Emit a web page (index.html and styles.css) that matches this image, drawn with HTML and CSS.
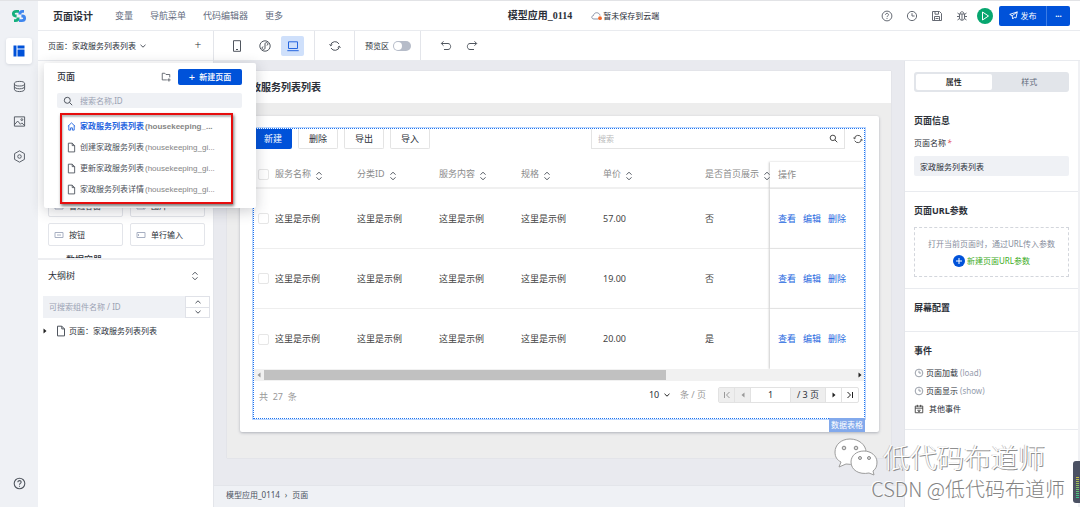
FILE: index.html
```html
<!DOCTYPE html>
<html lang="zh-CN">
<head>
<meta charset="utf-8">
<title>页面设计</title>
<link rel="stylesheet" href="styles.css">
</head>
<body>
<svg class="defs" aria-hidden="true">
  <symbol id="sort" viewBox="0 0 8 10"><path d="M1.5 3.7 4 1.2l2.5 2.5M1.5 6.3 4 8.8l2.5-2.5"/></symbol>
  <symbol id="file" viewBox="0 0 10 12"><path d="M1.5 1.2h4.3l2.7 2.7v7H1.5zM5.8 1.2v2.7h2.7"/></symbol>
  <symbol id="search" viewBox="0 0 10 10"><circle cx="4.3" cy="4.3" r="3"/><path d="M6.6 6.6 9.2 9.2"/></symbol>
  <symbol id="down" viewBox="0 0 8 6"><path d="M1.5 1.8 4 4.2l2.5-2.4"/></symbol>
  <symbol id="up" viewBox="0 0 8 6"><path d="M1.5 4.2 4 1.8l2.5 2.4"/></symbol>
  <symbol id="clock" viewBox="0 0 12 12"><circle cx="6" cy="6" r="4.6"/><path d="M6 3.2V6h2.6"/></symbol>
  <symbol id="help" viewBox="0 0 12 12"><circle cx="6" cy="6" r="4.9"/><path d="M4.5 4.8C4.5 2.8 7.6 2.900 7.500 4.800 7.500 5.900 6 5.900 6 7.100M6 8.100v.9"/></symbol>
  <symbol id="reload" viewBox="0 0 12 12"><path d="M1.600 5.400A4.500 4.500 0 0 1 10 4M10.400 6.600A4.500 4.500 0 0 1 2 8M.5 4.300l1.200 1.500 1.600-1.200M11.500 7.700l-1.200-1.500-1.600 1.200"/></symbol>
</svg>
<div class="app">
  <nav class="rail">
    <svg class="logo" viewBox="0 0 16 14"><g fill="none" stroke-width="2.800"><path stroke="#14b07d" d="M8 2.400H5.200C1.500 2.400 1.500 6.800 4.800 7h.8M3 11.600h1.500C6.800 11.600 7.200 10 7.200 8.500"/><path stroke="#3f86ee" d="M8 11.600h2.800c3.700 0 3.700-4.400.4-4.600h-.8M13 2.400h-1.500C9.200 2.400 8.800 4 8.800 5.500"/></g></svg>
    <button class="rail-btn active" aria-label="页面"><svg viewBox="0 0 12 12"><path fill="#0052d9" d="M.5.5h3v11h-3zM4.500.5h7v3h-7zM4.500 4.500h7v7h-7z"/></svg></button>
    <button class="rail-btn" aria-label="数据"><svg class="line" viewBox="0 0 14 14"><ellipse cx="7" cy="4" rx="5.500" ry="2.500"/><path d="M1.500 4v6c0 3.300 11 3.300 11 0V4M1.500 7c0 3.300 11 3.300 11 0"/></svg></button>
    <button class="rail-btn" aria-label="素材"><svg class="line" viewBox="0 0 14 14"><path d="M1.500 2h11v10h-11zM1.500 10.500l3.500-4 3 3.500 1.500-1.500 3 3"/><circle cx="9.500" cy="5" r="1"/></svg></button>
    <button class="rail-btn" aria-label="设置"><svg class="line" viewBox="0 0 14 14"><path d="m7 .9 5.300 3v6.200L7 13.100l-5.300-3V3.900z"/><circle cx="7" cy="7" r="1.900"/></svg></button>
    <button class="rail-btn last" aria-label="帮助"><svg class="line"><use href="#help"/></svg></button>
  </nav>
  <div class="main">
    <header class="top">
      <h1>页面设计</h1>
      <nav class="menu"><a href="#">变量</a><a href="#">导航菜单</a><a href="#">代码编辑器</a><a href="#">更多</a></nav>
      <div class="app-name"><b>模型应用_0114</b>
        <svg class="line cloud" viewBox="0 0 12 10"><path stroke="#8a93a6" d="M7 8H3C0 8 .3 4.700 2.500 4.500 3 .8 8.300.8 9 4.500"/><circle cx="9" cy="7.200" r="1.900" fill="#f2682a" stroke="none"/></svg><span>暂未保存到云端</span></div>
      <div class="top-actions">
        <button aria-label="帮助"><svg class="line"><use href="#help"/></svg></button>
        <button aria-label="历史"><svg class="line"><use href="#clock"/></svg></button>
        <button aria-label="保存"><svg class="line" viewBox="0 0 12 12"><path d="M1.500 1.500h7l2 2v7h-9zM3.500 10.500v-4h5v4M4 1.500v2.700h3.500V1.500M4.500 8.500h3"/></svg></button>
        <button aria-label="调试"><svg class="line" viewBox="0 0 12 12"><path d="M3.500 4h5v4c0 3-5 3-5 0zM4 4c0-3 4-3 4 0M6 4v6M1.500 3l2 1.500M10.500 3l-2 1.500M1 6.500h2.500M8.500 6.500H11M1.500 10l2-1.500M10.500 10l-2-1.500"/></svg></button>
      </div>
      <button class="play" aria-label="预览"><svg viewBox="0 0 16 16"><path d="M5.500 4v8l6-4z" fill="none" stroke="#fff"/></svg></button>
      <div class="publish"><button><svg viewBox="0 0 10 10"><path d="M9.200 1 .8 3.800l2.700 1.500.6 3.600 1.700-2 2 .8zM3.500 5.300 9.200 1" fill="none" stroke="#fff"/></svg>发布</button><button aria-label="更多操作">···</button></div>
    </header>
    <div class="work">
      <aside class="left">
        <section class="palette">
          <div class="page-head"><span>页面：家政服务列表列表</span><svg class="line chev"><use href="#down"/></svg><button aria-label="添加">+</button></div>
          <div class="cards">
            <button><svg class="line" viewBox="0 0 10 8"><path d="M1 1h8v6H1zM3 4h4"/></svg>普通容器</button>
            <button><svg class="line" viewBox="0 0 10 8"><path d="M1 1h8v6H1zM1 6l3-3 4 4"/></svg>图片</button>
            <button><svg class="line" viewBox="0 0 10 8"><path d="M1 1.500h8v5H1zM3 4h4"/></svg>按钮</button>
            <button><svg class="line" viewBox="0 0 10 8"><path d="M1 1.500h8v5H1zM2.500 3v2"/></svg>单行输入</button>
          </div>
          <h3 class="group"><svg class="line chev"><use href="#up"/></svg>数据容器</h3>
        </section>
        <section class="outline">
          <div class="outline-head"><h2>大纲树</h2><svg class="line sort"><use href="#sort"/></svg></div>
          <div class="tree-search"><input aria-label="搜索组件" placeholder="可搜索组件名称 / ID"><div class="stepper"><button aria-label="上一个"><svg class="line chev"><use href="#up"/></svg></button><button aria-label="下一个"><svg class="line chev"><use href="#down"/></svg></button></div></div>
          <div class="tree-row"><svg class="caret" viewBox="0 0 4 6"><path d="M.5.5 3.500 3 .5 5.500z"/></svg><svg class="line file"><use href="#file"/></svg>页面：家政服务列表列表</div>
        </section>
      </aside>
      <div class="right">
        <div class="tools">
          <div class="group-a">
            <button aria-label="手机"><svg class="line" viewBox="0 0 12 12"><path d="M2.500.7h7v10.600h-7zM5 9.500h2"/></svg></button>
            <button aria-label="小程序"><svg class="line" viewBox="0 0 12 12"><circle cx="6" cy="6" r="5.200"/><path d="M6 8c0 2-3 1.800-3 0 0-.8.700-1.200 1.300-1.300M6 8V4c0-2 3-1.800 3 0 0 .8-.7 1.200-1.300 1.300"/></svg></button>
            <button class="on" aria-label="桌面"><svg class="line" viewBox="0 0 12 12"><path d="M1.500 1.800h9v6.700h-9zM.3 10.700h11.400"/></svg></button>
          </div>
          <div class="group-b"><button aria-label="刷新"><svg class="line"><use href="#reload"/></svg></button></div>
          <div class="group-c"><label for="pv">预览区</label><input id="pv" type="checkbox" class="switch"></div>
          <div class="group-d">
            <button aria-label="撤销"><svg class="line" viewBox="0 0 12 12"><path d="M1.500 3.500h6.500c3.500 0 3.500 6 0 6H4M3.500 1.300 1.300 3.500l2.200 2.200"/></svg></button>
            <button aria-label="重做"><svg class="line" viewBox="0 0 12 12"><path d="M10.500 3.500H4c-3.500 0-3.500 6 0 6h4M8.500 1.300l2.200 2.200-2.200 2.200"/></svg></button>
          </div>
        </div>
        <div class="body">
          <div class="center">
            <div class="canvas">
              <div class="stage">
                <h2 class="page-title">家政服务列表列表</h2>
                <div class="sheet">
                  <div class="grid-box">
                    <div class="bar">
                      <button class="primary">新建</button><button>删除</button><button>导出</button><button>导入</button>
                      <div class="find"><input aria-label="搜索" placeholder="搜索"><svg class="line"><use href="#search"/></svg></div>
                      <button class="sync" aria-label="刷新"><svg class="line"><use href="#reload"/></svg></button>
                    </div>
                    <table>
                      <colgroup><col class="c-check"><col class="c-text"><col class="c-text"><col class="c-text"><col class="c-text"><col class="c-price"><col class="c-show"><col></colgroup>
                      <thead><tr><th><input type="checkbox" aria-label="全选"></th><th>服务名称<svg class="line sort"><use href="#sort"/></svg></th><th>分类ID<svg class="line sort"><use href="#sort"/></svg></th><th>服务内容<svg class="line sort"><use href="#sort"/></svg></th><th>规格<svg class="line sort"><use href="#sort"/></svg></th><th>单价<svg class="line sort"><use href="#sort"/></svg></th><th>是否首页展示<svg class="line sort"><use href="#sort"/></svg></th><th class="ops">操作</th></tr></thead>
                      <tbody>
                        <tr><td><input type="checkbox" aria-label="选择"></td><td>这里是示例</td><td>这里是示例</td><td>这里是示例</td><td>这里是示例</td><td>57.00</td><td>否</td><td class="ops"><a href="#">查看</a><a href="#">编辑</a><a href="#">删除</a></td></tr>
                        <tr><td><input type="checkbox" aria-label="选择"></td><td>这里是示例</td><td>这里是示例</td><td>这里是示例</td><td>这里是示例</td><td>19.00</td><td>否</td><td class="ops"><a href="#">查看</a><a href="#">编辑</a><a href="#">删除</a></td></tr>
                        <tr><td><input type="checkbox" aria-label="选择"></td><td>这里是示例</td><td>这里是示例</td><td>这里是示例</td><td>这里是示例</td><td>20.00</td><td>是</td><td class="ops"><a href="#">查看</a><a href="#">编辑</a><a href="#">删除</a></td></tr>
                      </tbody>
                    </table>
                    <div class="scroll"><svg class="caret back" viewBox="0 0 4 6"><path d="M3.500.5.5 3l3 2.500z"/></svg><div class="track"><div class="thumb"></div></div><svg class="caret" viewBox="0 0 4 6"><path d="M.5.5 3.500 3 .5 5.500z"/></svg></div>
                    <div class="pager">
                      <span class="total">共 &nbsp;27 &nbsp;条</span>
                      <div class="size"><select aria-label="每页条数"><option>10</option></select><svg class="line chev"><use href="#down"/></svg></div><span class="unit">条 / 页</span>
                      <div class="pages">
                        <button class="off" aria-label="首页"><svg class="line" viewBox="0 0 8 8"><path d="M1.500 1v6M6.500 1 3.500 4l3 3"/></svg></button>
                        <button class="off" aria-label="上一页"><svg class="caret" viewBox="0 0 4 6"><path d="M3.500.5.5 3l3 2.500z"/></svg></button>
                        <input aria-label="页码" value="1"><span>/ 3 页</span>
                        <button aria-label="下一页"><svg class="caret" viewBox="0 0 4 6"><path d="M.5.5 3.500 3 .5 5.500z"/></svg></button>
                        <button aria-label="末页"><svg class="line" viewBox="0 0 8 8"><path d="M6.500 1v6M1.500 1l3 3-3 3"/></svg></button>
                      </div>
                    </div>
                    <span class="tag">数据表格</span>
                  </div>
                </div>
              </div>
            </div>
            <footer class="crumbs"><span>模型应用_0114</span><span>›</span><span>页面</span></footer>
          </div>
          <aside class="props">
            <div class="tabs"><button class="on">属性</button><button>样式</button></div>
            <section class="info"><h2>页面信息</h2><label for="pn">页面名称<i>*</i></label><input id="pn" value="家政服务列表列表"></section>
            <section class="url"><h2>页面URL参数</h2><div class="drop"><p>打开当前页面时，通过URL传入参数</p><button><svg viewBox="0 0 12 12"><circle cx="6" cy="6" r="6" fill="#0052d9"/><path d="M3 6h6M6 3v6" stroke="#fff"/></svg>新建页面URL参数</button></div></section>
            <section class="screen"><h2>屏幕配置</h2></section>
            <section class="events"><h2>事件</h2>
              <div><svg class="line"><use href="#clock"/></svg>页面加载<em>(load)</em></div>
              <div><svg class="line"><use href="#clock"/></svg>页面显示<em>(show)</em></div>
              <div><svg class="line dark" viewBox="0 0 12 12"><path d="M1.500 2.500h9v8h-9zM1.500 5h9M4 1v2.500M8 1v2.500M4 7.500h4M5 9h2"/></svg><span>其他事件</span></div>
            </section>
          </aside>
        </div>
      </div>
    </div>
  </div>
  <div class="popover">
    <div class="pop-head"><h2>页面</h2><button class="folder" aria-label="新建文件夹"><svg class="line" viewBox="0 0 12 12"><path d="M7 9.500H1.500v-8h3L6 3h4.500v3.500M9.500 7.500v4M7.500 9.500h4"/></svg></button><button class="new"><b>+</b>新建页面</button></div>
    <div class="pop-search"><svg class="line"><use href="#search"/></svg><input aria-label="搜索页面" placeholder="搜索名称,ID"></div>
    <ul>
      <li class="cur"><svg class="line" viewBox="0 0 10 12"><path d="M1 5.800 5 2l4 3.800M2 5v5h2V7.500h2V10h2V5"/></svg>家政服务列表列表<span>(housekeeping_...</span></li>
      <li><svg class="line"><use href="#file"/></svg>创建家政服务列表<span>(housekeeping_gi...</span></li>
      <li><svg class="line"><use href="#file"/></svg>更新家政服务列表<span>(housekeeping_gi...</span></li>
      <li><svg class="line"><use href="#file"/></svg>家政服务列表详情<span>(housekeeping_gi...</span></li>
    </ul>
  </div>
  <div class="watermark">
    <div class="wm-top"><svg viewBox="0 0 44 38"><g fill="#fff" stroke="#9c9c9c"><path d="M16 1C7 1 1 7 1 14c0 5 2 8 6 10l-2 5 7-3c13 2 20-4 20-12C32 7 25 1 16 1z"/><path d="M30 13c-8 0-13 5-13 11 0 8 8 13 18 11l5 2-1-4c3-2 4-5 4-9 0-6-6-11-13-11z"/></g><g fill="#ddd" stroke="#888"><circle cx="10" cy="10" r="1.800"/><circle cx="22" cy="10" r="1.800"/><circle cx="26" cy="20" r="1.500"/><circle cx="35" cy="20" r="1.500"/></g></svg><span>低代码布道师</span></div>
    <div class="wm-sub">CSDN @低代码布道师</div>
  </div>
  <div class="meter"><i></i></div>
</div>
</body>
</html>
```

FILE: styles.css
```css
* { box-sizing: border-box; }
body { margin: 0; font: 8px/12px "Noto Sans", "Noto Sans CJK SC", sans-serif; color: #2b2f38; }
button, input, select { font: inherit; color: inherit; border: 0; background: none; padding: 0; margin: 0; min-width: 0; }
input::placeholder { color: #9aa1b3; opacity: 1; }
h1, h2, h3, p, ul { margin: 0; padding: 0; }
h2 { font-size: 9px; line-height: 14px; }
a { color: inherit; text-decoration: none; }
button, label { display: flex; align-items: center; justify-content: center; }
svg { flex: none; display: block; }
.defs { position: absolute; width: 0; height: 0; }
.line { fill: none; stroke: #50565f; stroke-width: 1; width: 12px; height: 12px; }
.chev { width: 8px; height: 6px; }
.sort { width: 8px; height: 10px; }
.caret { width: 4px; height: 6px; fill: #222; }

.app { position: relative; display: flex; height: 100vh; overflow: hidden; border-top: 1px solid #e2e3e6; background: #fff; }
.rail { flex: none; width: 38px; background: #eff1f5; display: flex; flex-direction: column; align-items: center; gap: 9px; padding: 8px 0 11px; }
.logo { width: 16px; height: 14px; margin-bottom: 6px; }
.rail-btn { width: 26px; height: 26px; border-radius: 3px; }
.rail-btn svg { width: 13px; height: 13px; }
.rail-btn.active { background: #fff; box-shadow: 0 1px 3px #d4d7de; }
.rail-btn.active svg { width: 12px; height: 12px; }
.rail-btn.last { margin-top: auto; }

.main { flex: 1; min-width: 0; display: flex; flex-direction: column; }
.top { flex: none; height: 30px; border-bottom: 1px solid #e9ebef; display: flex; align-items: center; padding: 0 10px 0 15px; }
.top h1 { font-size: 10px; line-height: 14px; margin-right: 22px; }
.menu { display: flex; gap: 17px; font-size: 9px; color: #636c7e; flex: 14; }
.app-name { display: flex; align-items: center; white-space: nowrap; }
.app-name b { font: bold 10px/14px "Liberation Serif", "Noto Sans CJK SC", serif; margin-right: 19px; }
.cloud { height: 10px; }
.top-actions { flex: 11; display: flex; justify-content: flex-end; gap: 13px; padding-right: 9px; }
.top-actions .line { stroke: #666b74; }
.play { width: 16px; height: 16px; border-radius: 50%; background: #07a66f; margin-right: 6px; }
.play svg { width: 16px; height: 16px; }
.publish { display: flex; height: 20px; background: #0052d9; color: #fff; border-radius: 2px; }
.publish button:first-child { width: 48px; gap: 3px; border-right: 1px solid #3c7ce4; }
.publish button:last-child { width: 23px; font-weight: bold; }
.publish svg { width: 9px; height: 9px; }

.work { flex: 1; min-height: 0; display: flex; }
.left { flex: none; width: 176px; border-right: 1px solid #e3e5ea; display: flex; flex-direction: column; }
.palette { height: 229px; overflow: hidden; border-bottom: 2px solid #edeef1; }
.page-head { display: flex; align-items: center; height: 30px; padding: 0 10px; border-bottom: 1px solid #e9ebef; }
.page-head .chev { margin-left: 3px; }
.page-head button { margin-left: auto; width: 10px; font-size: 12px; font-weight: 300; }
.cards { display: grid; grid-template-columns: 75px 75px; gap: 6px 7px; padding: 133px 10px 8px; }
.cards button { height: 23px; border: 1px solid #e3e5ea; border-radius: 2px; justify-content: flex-start; gap: 5px; padding-left: 5px; }
.cards .line { width: 10px; height: 8px; stroke: #a8b0c2; }
.group { font-size: 9px; line-height: 12px; font-weight: 500; display: flex; align-items: center; gap: 8px; padding-left: 12px; }
.group .line { stroke: #2f6fe0; }
.outline { flex: 1; }
.outline-head { display: flex; justify-content: space-between; align-items: center; height: 31px; padding: 0 14px 0 10px; }
.outline-head h2 { font-weight: 400; }
.tree-search { display: flex; margin: 5px 3px 7px 5px; height: 22px; background: #eff1f5; }
.tree-search input { flex: 1; padding-left: 6px; }
.stepper { width: 25px; display: grid; border: 1px solid #e0e2e8; background: #fff; }
.stepper button + button { border-top: 1px solid #e0e2e8; }
.tree-row { display: flex; align-items: center; padding-left: 5px; }
.file { width: 10px; margin: 0 3px 0 9px; }

.right { flex: 1; min-width: 0; display: flex; flex-direction: column; }
.tools { flex: none; height: 30px; display: flex; border-bottom: 1px solid #e9ebef; }
.tools > div { display: flex; align-items: center; border-right: 1px solid #e3e5ea; }
.tools button { width: 23px; height: 20px; border-radius: 2px; }
.tools .group-a { padding: 0 10px 0 11px; gap: 5px; }
.tools .on { background: #cfe0fb; }
.tools .on .line { stroke: #2666df; }
.tools .group-b { padding: 0 8px; }
.tools .group-c { padding: 0 9px 0 10px; gap: 4px; }
.tools .group-d { border: 0; padding-left: 13px; gap: 3px; }
.switch { appearance: none; width: 18px; height: 10px; border-radius: 5px; background: #b6bcc9; padding: 1px; }
.switch::before { content: ""; display: block; width: 8px; height: 8px; border-radius: 4px; background: #fff; }

.body { flex: 1; min-height: 0; display: flex; }
.center { flex: 1; min-width: 0; display: flex; flex-direction: column; }
.canvas { flex: 1; background: #e9eaef; padding: 10px 13px 27px; }
.stage { background: #ededed; height: 100%; box-shadow: 0 0 1px #c8cad0; }
.page-title { background: #fff; font-size: 10px; height: 32px; line-height: 32px; padding-left: 14px; }
.sheet { background: #fff; margin: 13px 12px 0 13px; padding: 12px 14px 13px 13px; border-radius: 2px; box-shadow: 0 1px 3px #aeb0b8; }
.grid-box { position: relative; border: 1px dotted #1f74ee; box-shadow: 0 0 0 1px #b9d5ff; font-size: 9px; }
.bar { display: flex; height: 20px; gap: 6px; }
.bar > button { width: 40px; border: 1px solid #e4e4e4; border-top: 0; border-radius: 0 0 2px 2px; }
.bar .primary { width: 38px; background: #0052d9; color: #fff; border: 0; }
.find { display: flex; align-items: center; flex: 0 1 254px; margin-left: auto; border: 1px solid #e4e4e4; border-top: 0; padding: 0 6px; font-size: 8px; }
.find input { flex: 1; }
.find input::placeholder { color: #bbb; }
.find .line { width: 9px; height: 9px; stroke: #333; }
.bar .sync { width: 13px; border: 0; }
.sync .line { width: 10px; height: 10px; stroke: #333; }
table { width: 100%; table-layout: fixed; border-collapse: separate; border-spacing: 0; margin-top: 13px; }
.c-check { width: 17px; }
.c-text { width: 82px; }
.c-price { width: 102px; }
.c-show { width: 69px; }
th { height: 27px; padding: 0 0 0 4px; border-bottom: 2px solid #f0f0f0; text-align: left; font-weight: 400; color: #8b8b8b; white-space: nowrap; }
th .sort { display: inline-block; vertical-align: -4px; margin-left: 4px; }
td { height: 60px; padding: 0 0 0 4px; border-bottom: 1px solid #eee; color: #444; }
tbody tr:last-child td { border-bottom: 0; }
th input, td input { appearance: none; display: block; width: 11px; height: 11px; border: 1px solid #e6e6e6; border-radius: 2px; background: #fff; }
.ops { padding-left: 8px; box-shadow: -1px 0 2px #ccc; background: #fff; }
.ops a { color: #2468e0; margin-right: 7px; }
.scroll { position: relative; display: flex; align-items: center; height: 12px; background: #f1f1f1; padding: 0 2px 0 3px; gap: 3px; }
.scroll .back { fill: #999; }
.track { flex: 1; }
.thumb { width: 68%; height: 10px; background: #c1c1c1; }
.pager { display: flex; align-items: center; height: 37px; padding: 0 5px 9px 5px; }
.total { margin-right: auto; padding-top: 4px; color: #999; }
.size { display: flex; align-items: center; gap: 1px; }
.size select { appearance: none; width: 13px; }
.size .line, .pages .line { stroke: #222; }
.unit { color: #999; margin: 0 12px 0 9px; }
.pages { display: flex; height: 16px; border: 1px solid #e2e2e2; border-radius: 2px; }
.pages button { width: 16px; border-right: 1px solid #e2e2e2; }
.pages button:last-child { border: 0; }
.pages .line { width: 8px; height: 8px; }
.pages .off { background: #eee; }
.pages .off .line { stroke: #999; }
.pages .off .caret { fill: #999; }
.pages input { width: 39px; text-align: center; }
.pages span { width: 36px; text-align: center; background: #eee; line-height: 14px; border: solid #e2e2e2; border-width: 0 1px; }
.tag { position: absolute; top: 100%; right: -1px; background: #82a9ec; color: #fff; font-size: 8px; line-height: 14px; padding: 0 2px; }
.crumbs { flex: none; height: 22px; display: flex; gap: 5px; align-items: center; padding: 0 12px 4px; background: #eff1f5; border-top: 1px solid #e3e5ea; color: #4b5260; }

.props { flex: none; width: 176px; padding-top: 11px; border-right: 2px solid #f0f1f4; border-left: 1px solid #e3e5ea; background: #fff; }
.tabs { display: grid; grid-template-columns: 1fr 1fr; height: 20px; margin: 0 9px; padding: 2px; background: #e2e5ea; border-radius: 3px; color: #616a7b; }
.tabs .on { background: #fff; border-radius: 2px; color: #111; font-weight: 500; }
.props section { padding: 12px 9px 0; border-bottom: 1px solid #e9ebef; }
.props .info { height: 100px; padding-top: 22px; }
.info label { justify-content: flex-start; margin: 9px 0 7px; }
.info i { color: #e34d59; margin-left: 1px; }
.info input { width: 100%; height: 20px; background: #eff1f5; border-radius: 2px; padding-left: 6px; }
.props .url { height: 97px; }
.drop { margin-top: 9px; height: 50px; border: 1px dashed #d3d6dc; display: flex; flex-direction: column; align-items: center; justify-content: center; gap: 5px; color: #868d9c; }
.drop p { white-space: nowrap; }
.drop button { color: #3cab1c; gap: 2px; }
.drop svg { width: 12px; height: 12px; }
.props .screen { height: 43px; }
.props .events { padding-bottom: 11px; }
.events h2 { margin-bottom: 6px; }
.events div { display: flex; align-items: center; height: 18px; }
.events .line { width: 10px; height: 10px; stroke: #858b98; margin-right: 2px; }
.events .dark { stroke: #333; }
.events em { font-style: normal; color: #959cad; margin-left: 2px; }
.events span { margin-left: 3px; }

.popover { position: absolute; left: 44px; top: 62px; width: 212px; padding: 6px 14px 4px 13px; background: #fff; border-radius: 2px; box-shadow: 0 3px 14px rgba(40, 45, 60, .24); }
.pop-head { display: flex; align-items: center; height: 16px; }
.pop-head h2 { flex: 1; font-weight: 500; }
.folder { margin-right: 7px; }
.folder svg { width: 10px; height: 10px; }
.new { width: 64px; height: 16px; gap: 4px; background: #0052d9; color: #fff; border-radius: 2px; font-weight: 500; }
.new b { font-size: 11px; font-weight: 400; }
.pop-search { display: flex; align-items: center; height: 15px; margin: 8px 0 5px; padding-left: 6px; gap: 7px; background: #eff1f5; border-radius: 2px; }
.pop-search .line { width: 10px; height: 10px; }
.pop-search input { flex: 1; }
.popover ul { list-style: none; margin: 0 9px 0 3px; padding: 1px 0 2px 5px; border: 2px solid #e60d0d; box-shadow: 1px 2px 3px #777, inset 1px 2px 2px #bbb; white-space: nowrap; }
.popover li { display: flex; align-items: center; height: 21px; font-family: "Liberation Sans", "Noto Sans CJK SC", sans-serif; color: #4b4f58; }
.popover li svg { width: 9px; height: 11px; margin-right: 4px; }
.popover li span { color: #858585; margin-left: 1px; }
.popover .cur { color: #1f64e0; font-weight: bold; }
.popover .cur .line { stroke: #1f64e0; }

.watermark { position: absolute; right: 15px; bottom: 5px; display: flex; flex-direction: column; align-items: flex-end; font-family: "Noto Sans CJK SC", sans-serif; font-weight: 300; pointer-events: none; }
.wm-top { display: flex; align-items: center; gap: 5px; padding-right: 20px; font-size: 27px; line-height: 34px; color: #fff; text-shadow: 1px 1px 0 #8f8f8f, -1px 0 0 #ccc; }
.wm-top svg { width: 44px; height: 38px; }
.wm-sub { font-size: 20px; line-height: 26px; color: #848484; text-shadow: -1px -1px 0 #fff; }
.meter { position: absolute; right: 0; bottom: 4px; width: 7px; height: 42px; background: #4b5163; border-radius: 3px 0 0 3px; padding: 16px 0 5px 3px; }
.meter i { display: block; height: 100%; width: 3px; background: repeating-linear-gradient(transparent 0 1px, #4b5163 1px 2px), linear-gradient(#c9bd45, #35c58c); }
```
